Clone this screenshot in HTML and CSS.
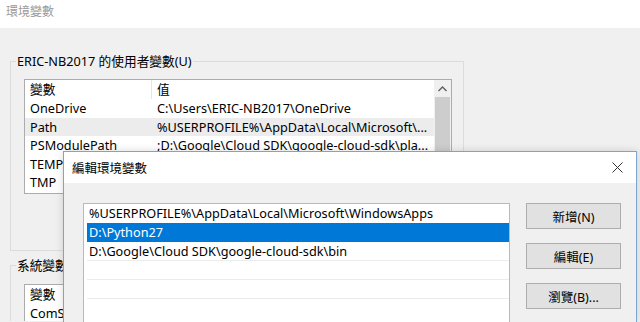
FILE: index.html
```html
<!DOCTYPE html>
<html>
<head>
    <link rel="stylesheet" href="styles.css">
</head>
<body>
    <div class="titlebar">環境變數</div>

    <div class="window-body">
        <fieldset class="group">
            <legend>ERIC-NB2017 的使用者變數(U)</legend>
            <div class="listview">
                <div class="lv-content">
                    <div class="lv-head">
                        <span class="col-name">變數</span>
                        <span class="col-value">值</span>
                    </div>
                    <div class="lv-row">
                        <span class="col-name">OneDrive</span>
                        <span class="col-value">C:\Users\ERIC-NB2017\OneDrive</span>
                    </div>
                    <div class="lv-row hover">
                        <span class="col-name">Path</span>
                        <span class="col-value">%USERPROFILE%\AppData\Local\Microsoft\...</span>
                    </div>
                    <div class="lv-row">
                        <span class="col-name">PSModulePath</span>
                        <span class="col-value">;D:\Google\Cloud SDK\google-cloud-sdk\pla...</span>
                    </div>
                    <div class="lv-row">
                        <span class="col-name">TEMP</span>
                        <span class="col-value">%USERPROFILE%\AppData\Local\Temp</span>
                    </div>
                    <div class="lv-row">
                        <span class="col-name">TMP</span>
                        <span class="col-value">%USERPROFILE%\AppData\Local\Temp</span>
                    </div>
                </div>
                <div class="scrollbar">
                    <div class="sb-up">
                        <svg width="9" height="6" viewBox="0 0 9 6"><path d="M0.5 5 L4.5 1 L8.5 5" fill="none" stroke="#606060" stroke-width="1.4"/></svg>
                    </div>
                    <div class="sb-thumb"></div>
                </div>
            </div>
        </fieldset>

        <fieldset class="group group-sys">
            <legend>系統變數(S)</legend>
            <div class="listview listview-sys">
                <div class="lv-content">
                    <div class="lv-head">
                        <span class="col-name">變數</span>
                        <span class="col-value">值</span>
                    </div>
                    <div class="lv-row">
                        <span class="col-name">ComSpec</span>
                        <span class="col-value">C:\WINDOWS\system32\cmd.exe</span>
                    </div>
                </div>
            </div>
        </fieldset>
    </div>

    <div class="dialog">
        <div class="dialog-title">
            <span>編輯環境變數</span>
            <svg class="close" width="11" height="11" viewBox="0 0 11 11"><path d="M0.5 0.5 L10.5 10.5 M10.5 0.5 L0.5 10.5" stroke="#333" stroke-width="1"/></svg>
        </div>
        <div class="dialog-body">
            <div class="path-list">
                <div class="path-row">%USERPROFILE%\AppData\Local\Microsoft\WindowsApps</div>
                <div class="path-row selected">D:\Python27</div>
                <div class="path-row">D:\Google\Cloud SDK\google-cloud-sdk\bin</div>
                <div class="path-row empty"></div>
                <div class="path-row empty"></div>
                <div class="path-row empty"></div>
            </div>
            <div class="dialog-buttons">
                <button>新增(N)</button>
                <button>編輯(E)</button>
                <button>瀏覽(B)...</button>
            </div>
        </div>
    </div>
</body>
</html>
```

FILE: styles.css
```css
html, body {
    margin: 0;
    height: 100%;
    overflow: hidden;
}

body {
    background: #f0f0f0;
    font-family: "Noto Sans", "Noto Sans CJK TC", sans-serif;
    font-size: 12.7px;
    color: #000;
}

.titlebar {
    height: 28px;
    line-height: 24px;
    padding-left: 6px;
    background: #fff;
    color: #999;
    font-size: 12px;
    box-sizing: border-box;
}

.window-body {
    padding: 24px 0 0 10px;
}

.group {
    width: 454px;
    box-sizing: border-box;
    margin: 0;
    padding: 9px 11px 56px 13px;
    border: 1px solid #dcdcdc;
}

.group legend {
    margin-left: -8px;
    padding: 0 1px;
    line-height: 18px;
}

.group-sys {
    margin-top: 5px;
    padding-top: 10px;
    padding-bottom: 0;
    border-bottom: none;
}

.listview {
    display: flex;
    width: 428px;
    height: 115px;
    box-sizing: border-box;
    border: 1px solid #acacac;
    background: #fff;
}

.listview-sys {
    height: 37px;
    border-bottom: none;
}

.lv-content {
    flex: 1;
    overflow: hidden;
}

.lv-head,
.lv-row {
    display: flex;
    white-space: nowrap;
}

.lv-head {
    height: 19px;
    line-height: 19px;
}

.lv-head .col-name {
    border-right: 1px solid #e5e5e5;
}

.lv-row {
    height: 18.6px;
    line-height: 18.6px;
}

.lv-row.hover {
    background: #ececec;
}

.col-name {
    width: 127px;
    padding-left: 5px;
    box-sizing: border-box;
    flex: none;
}

.col-value {
    padding-left: 5px;
    overflow: hidden;
}

.scrollbar {
    width: 17px;
    display: flex;
    flex-direction: column;
    background: #f0f0f0;
}

.sb-up {
    height: 17px;
    display: flex;
    align-items: center;
    justify-content: center;
}

.sb-thumb {
    flex: 1;
    margin: 0 1px;
    background: #cdcdcd;
}

.dialog {
    position: absolute;
    left: 63px;
    top: 151px;
    width: 574px;
    height: 171px;
    box-sizing: border-box;
    border: 1px solid #7ba4d0;
    border-bottom: none;
    background: #f0f0f0;
    box-shadow: 0 0 8px rgba(0, 0, 0, 0.15);
}

.dialog-title {
    height: 31px;
    display: flex;
    align-items: center;
    justify-content: space-between;
    padding: 0 13px 0 8px;
    background: #fff;
    font-size: 12.5px;
}

.dialog-body {
    display: flex;
    gap: 16px;
    padding: 20px 0 0 19px;
}

.path-list {
    width: 427px;
    height: 119px;
    box-sizing: border-box;
    border: 1px solid #b9b9b9;
    border-bottom: none;
    background: #fff;
    padding-left: 3px;
    overflow: hidden;
}

.path-row {
    height: 18.8px;
    line-height: 18.8px;
    padding-left: 2px;
    white-space: nowrap;
    box-sizing: border-box;
}

.path-row.selected {
    background: #0078d7;
    color: #fff;
}

.path-row.empty {
    border-top: 1px solid #ececec;
}

.dialog-buttons {
    display: flex;
    flex-direction: column;
    gap: 14px;
}

button {
    width: 95px;
    height: 26px;
    padding: 0;
    border: 1px solid #adadad;
    background: #e1e1e1;
    font-family: inherit;
    font-size: 12.5px;
    color: #000;
}
```
